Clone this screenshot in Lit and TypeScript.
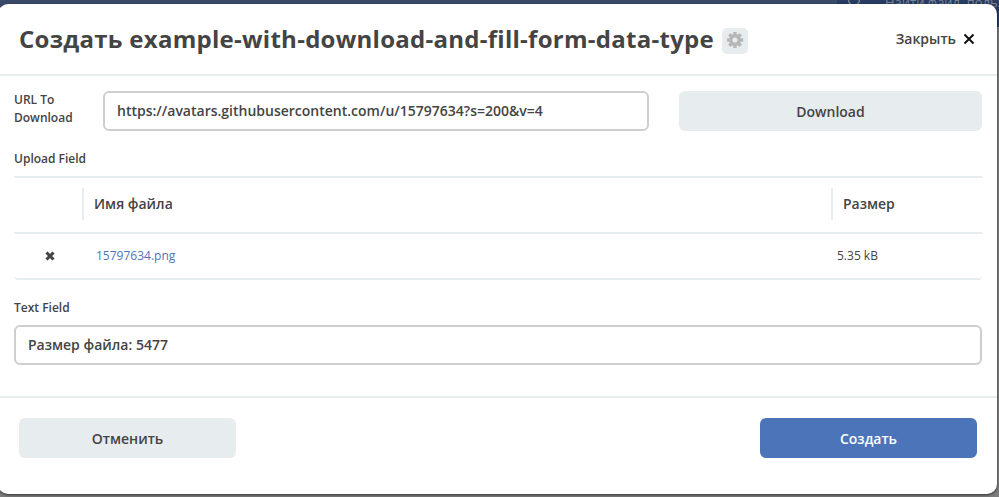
import { LitElement, html, css, svg } from "lit";
import { customElement } from "lit/decorators.js";

const tooth = (a: number) =>
  svg`<rect x="8.1" y="1" width="3.8" height="5" rx=".7" transform="rotate(${a} 10 10)"></rect>`;

@customElement("app-root")
export class AppRoot extends LitElement {
  static styles = css`
    :host {
      display: block;
      position: relative;
      width: 999px;
      height: 497px;
      overflow: hidden;
      background: #7d7d7d;
      font: 600 14px/20px "Open Sans", sans-serif;
      color: #444;
    }
    * { box-sizing: border-box; }
    .backdrop {
      position: absolute;
      inset: 0 0 auto 0;
      height: 27px;
      background: #3a4968;
    }
    .search {
      position: absolute;
      left: 837px;
      top: 0;
      width: 162px;
      height: 27px;
      background: #263c63;
      overflow: hidden;
    }
    .lens { position: absolute; left: 10px; top: -7px; }
    .hint {
      position: absolute;
      left: 48px;
      top: -8px;
      font-size: 13px;
      line-height: 20px;
      font-weight: 400;
      white-space: nowrap;
      color: #7b8290;
    }
    .modal {
      position: relative;
      margin: 4px 0 0 -2px;
      width: 999px;
      height: 490px;
      border-radius: 10px;
      background: #fff;
      box-shadow: 0 1px 3px rgba(0, 0, 0, 0.6);
      display: flex;
      flex-direction: column;
    }
    header {
      height: 72px;
      border-bottom: 2px solid #e7ecee;
      padding: 0 22px 0 21px;
      display: flex;
      align-items: center;
      box-sizing: border-box;
    }
    h1 { margin: 0; font-size: 24px; line-height: 32px; font-weight: 700; white-space: nowrap; letter-spacing: 0.27px; }
    .gear {
      width: 26px;
      height: 26px;
      margin: 3px 0 0 8px;
      border-radius: 5px;
      background: #e7ecee;
      display: grid;
      place-items: center;
    }
    .gear svg { margin-top: -1px; }
    .close { margin-left: auto; display: flex; align-items: center; gap: 7px; }
    .body { height: 320px; padding: 15px 15px 0 16px; }
    .row { display: flex; align-items: center; }
    .label { font-size: 12px; line-height: 18px; }
    .url { width: 89px; margin-top: -4px; }
    .input {
      height: 40px;
      border: 2px solid #cccecf;
      border-radius: 6px;
      padding: 0 12px;
      line-height: 36px;
      white-space: nowrap;
    }
    .row .input { width: 546px; margin-right: 30px; }
    .btn {
      height: 40px;
      border-radius: 6px;
      background: #e7ecee;
      line-height: 41px;
      text-align: center;
    }
    .row .btn { flex: 1; }
    .upload { margin-top: 19px; }
    .table {
      margin-top: 8px;
      border-top: 2px solid #e7ecee;
      border-bottom: 2px solid #e7ecee;
      border-radius: 0 0 4px 4px;
    }
    .tr { display: grid; grid-template-columns: 68px 749px 1fr; align-items: center; }
    .head { height: 56px; border-bottom: 2px solid #e7ecee; }
    .th { height: 32px; margin-top: -2px; line-height: 32px; border-left: 2px solid #e7ecee; padding-left: 10px; }
    .data { height: 44px; font-size: 12px; font-weight: 400; }
    .del { padding-left: 31px; display: flex; }
    .file { color: #4b75b8; padding-left: 14px; }
    .size { padding-left: 6px; }
    .text { margin: 19px 0 8px; }
    footer {
      border-top: 2px solid #e7ecee;
      padding: 20px 20px 0 21px;
      display: flex;
      justify-content: space-between;
    }
    footer .btn { width: 217px; }
    .primary { background: #4b75b8; color: #fff; }
  `;

  render() {
    return html`
      <div class="backdrop">
        <div class="search">
          <svg class="lens" width="18" height="18" viewBox="0 0 18 18" fill="none" stroke="#7b8290" stroke-width="1.5">
            <circle cx="7" cy="7" r="5.5"></circle>
          </svg>
          <span class="hint">Найти файл, польз</span>
        </div>
      </div>
      <section class="modal">
        <header>
          <h1>Создать example-with-download-and-fill-form-data-type</h1>
          <div class="gear">
            <svg width="18" height="18" viewBox="0 0 20 20" fill="#b5b7b7">
              ${[0, 45, 90, 135, 180, 225, 270, 315].map(tooth)}
              <circle cx="10" cy="10" r="4.7" fill="none" stroke="#b5b7b7" stroke-width="3.8"></circle>
            </svg>
          </div>
          <div class="close">
            <span>Закрыть</span>
            <svg width="12" height="12" viewBox="0 0 12 12" stroke="#111" stroke-width="2">
              <path d="M1.5 1.5l9 9M10.5 1.5l-9 9"></path>
            </svg>
          </div>
        </header>
        <div class="body">
          <div class="row">
            <div class="label url">URL To<br />Download</div>
            <div class="input">https://avatars.githubusercontent.com/u/15797634?s=200&amp;v=4</div>
            <div class="btn">Download</div>
          </div>
          <div class="label upload">Upload Field</div>
          <div class="table">
            <div class="tr head">
              <span></span>
              <div class="th">Имя файла</div>
              <div class="th">Размер</div>
            </div>
            <div class="tr data">
              <div class="del">
                <svg width="10" height="10" viewBox="0 0 10 10" stroke="#444" stroke-width="3">
                  <path d="M1.5 1.5l7 7M8.5 1.5l-7 7"></path>
                </svg>
              </div>
              <div class="file">15797634.png</div>
              <div class="size">5.35 kB</div>
            </div>
          </div>
          <div class="label text">Text Field</div>
          <div class="input">Размер файла: 5477</div>
        </div>
        <footer>
          <div class="btn">Отменить</div>
          <div class="btn primary">Создать</div>
        </footer>
      </section>
    `;
  }
}
